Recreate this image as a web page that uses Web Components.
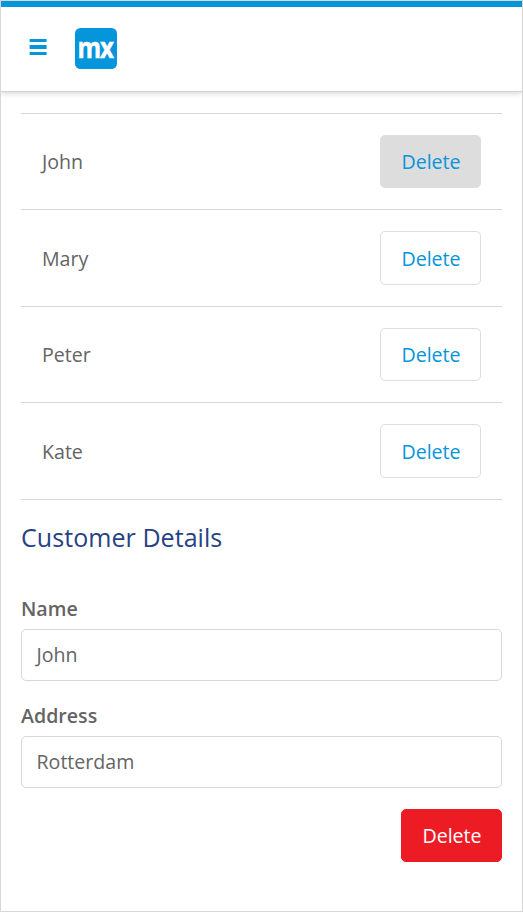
<!DOCTYPE html>
<html lang="en">
<head>
<meta charset="utf-8">
<title>Customers</title>
<style>
body { margin: 0; font: 19.6px/28px "Open Sans", sans-serif; color: #646464; background: #fff; }
</style>
</head>
<body>
<app-shell>
  <app-header slot="header"></app-header>
  <customer-list>
    <customer-row style="--h:96px"><span>John</span><mx-button slot="action" class="pressed">Delete</mx-button></customer-row>
    <customer-row style="--h:97px;--bh:54px;--nudge:2px"><span>Mary</span><mx-button slot="action">Delete</mx-button></customer-row>
    <customer-row style="--h:96px"><span>Peter</span><mx-button slot="action">Delete</mx-button></customer-row>
    <customer-row style="--h:97px;--bh:54px;--nudge:2px"><span>Kate</span><mx-button slot="action">Delete</mx-button></customer-row>
  </customer-list>
  <customer-details heading="Customer Details">
    <form-field label="Name">John</form-field>
    <form-field label="Address">Rotterdam</form-field>
    <mx-button slot="footer" class="danger">Delete</mx-button>
  </customer-details>
</app-shell>
<script>
const define = (name, html) => customElements.define(name, class extends HTMLElement {
  constructor() {
    super();
    const template = document.createElement('template');
    template.innerHTML = html;
    this.attachShadow({ mode: 'open' }).append(template.content.cloneNode(true));
    this.shadowRoot.querySelectorAll('[data-attr]').forEach(el => {
      el.textContent = this.getAttribute(el.dataset.attr);
    });
  }
});

define('app-shell', `
<style>
:host { display: flex; flex-direction: column; box-sizing: border-box; height: 912px; border: 1px solid #d7d7d7; overflow: hidden; }
main { padding: 21px 20px 0; }
</style>
<slot name="header"></slot><main><slot></slot></main>`);

define('app-header', `
<style>
:host { display: flex; flex: none; align-items: center; gap: 28px; box-sizing: border-box; height: 91px; padding: 0 28px 2px;
  border-top: 6px solid #0595db; border-bottom: 1px solid #d2d2d2; box-shadow: 0 2px 5px rgba(0,0,0,.14); }
svg { display: block; flex: none; }
.menu { margin-bottom: 2px; }
.logo { display: flex; justify-content: center; align-items: flex-start; width: 42px; height: 41px; border-radius: 5.5px; background: #0595db; }
.logo span { font-weight: 700; font-size: 29px; line-height: 38px; letter-spacing: -1.6px; color: #fff;
  -webkit-text-stroke: .5px #fff; transform: translate(-1px, -.5px) scaleX(.83); }
</style>
<svg class="menu" width="18" height="17" viewBox="0 0 18 17" fill="#0595db"><path d="M.6 0h17v3H.6zM.6 6h17v4H.6zM.6 13h17v3H.6z"/></svg>
<div class="logo"><span>mx</span></div>`);

define('customer-list', `
<style>:host { display: block; border-top: 1px solid #d7d7d7; }</style><slot></slot>`);

define('customer-row', `
<style>
:host { display: flex; justify-content: space-between; align-items: flex-start; box-sizing: border-box; height: var(--h);
  padding: 21px 21px 0; border-bottom: 1px solid #d7d7d7; }
.name { line-height: 53px; height: 53px; padding-top: calc(var(--nudge, 0px) / 2); }
</style>
<div class="name"><slot></slot></div><slot name="action"></slot>`);

define('mx-button', `
<style>
:host { display: flex; align-items: center; justify-content: center; box-sizing: border-box; width: 101px; height: var(--bh, 53px);
  padding: var(--nudge, 0px) 0 0 1px;
  border: 1px solid #ddd; border-radius: 5px; color: #0595db; background: #fff; }
:host(.pressed) { background: #ddd; }
:host(.danger) { background: #ed1c24; border-color: #ed1c24; color: #fff; }
</style>
<slot></slot>`);

define('form-field', `
<style>
:host { display: block; margin-bottom: 21px; }
.label { display: block; font-weight: 600; line-height: 28px; padding-bottom: 6px; }
.input { box-sizing: border-box; height: 52px; border: 1px solid #d7d7d7; border-radius: 5px; padding: 0 14.5px; line-height: 50px; }
</style>
<span class="label" data-attr="label"></span><div class="input"><slot></slot></div>`);

define('customer-details', `
<style>
:host { display: block; }
h2 { margin: 19px 0 40px; font-size: 25px; line-height: 36px; font-weight: 400; color: #264284; letter-spacing: .06px; }
footer { display: flex; justify-content: flex-end; }
</style>
<h2 data-attr="heading"></h2><slot></slot><footer><slot name="footer"></slot></footer>`);
</script>
</body>
</html>
